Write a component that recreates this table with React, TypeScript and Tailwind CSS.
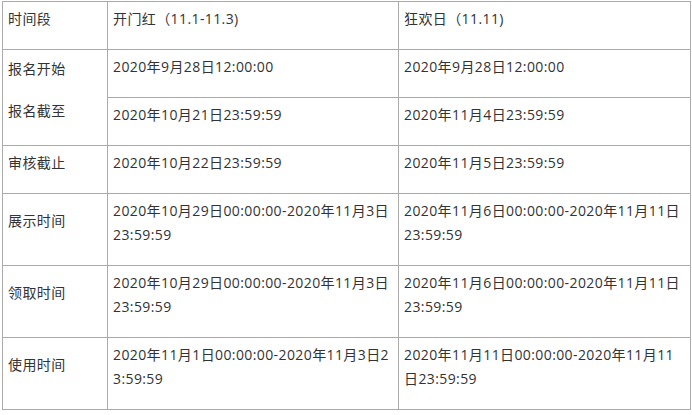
const rows: { label: string; a: string[]; b: string[] }[] = [
  { label: '审核截止', a: ['2020年10月22日23:59:59'], b: ['2020年11月5日23:59:59'] },
  {
    label: '展示时间',
    a: ['2020年10月29日00:00:00-2020年11月3日', '23:59:59'],
    b: ['2020年11月6日00:00:00-2020年11月11日', '23:59:59'],
  },
  {
    label: '领取时间',
    a: ['2020年10月29日00:00:00-2020年11月3日', '23:59:59'],
    b: ['2020年11月6日00:00:00-2020年11月11日', '23:59:59'],
  },
  {
    label: '使用时间',
    a: ['2020年11月1日00:00:00-2020年11月3日2', '3:59:59'],
    b: ['2020年11月11日00:00:00-2020年11月11', '日23:59:59'],
  },
];

const cell = 'border border-[#ababab] align-top pl-[5px] pr-[4px] pt-[5px] pb-[18px] whitespace-nowrap';
const labelCell = 'border border-[#ababab] align-middle pl-[5px] pr-[4px] pt-[5px] pb-[22px] whitespace-nowrap';

const App = () => {
  return (
    <div
      className="w-[692px] h-[415px] bg-white pl-[2px] pt-[1px] text-[14px] leading-[24px] tracking-[0.4px] text-[#333333] tabular-nums"
      style={{ fontFamily: '"Open Sans", "Noto Sans CJK SC", sans-serif' }}
    >
      <table className="border-collapse table-fixed w-[688px]">
        <colgroup>
          <col className="w-[105px]" />
          <col className="w-[291px]" />
          <col className="w-[292px]" />
        </colgroup>
        <tbody>
          <tr>
            <td className={cell}>时间段</td>
            <td className={cell}>开门红（11.1-11.3)</td>
            <td className={cell}>狂欢日（11.11)</td>
          </tr>
          <tr>
            <td rowSpan={2} className="border border-[#ababab] align-top pl-[5px] pt-[7px]">
              <p className="mb-[18px]">报名开始</p>
              <p>报名截至</p>
            </td>
            <td className={cell}>2020年9月28日12:00:00</td>
            <td className={cell}>2020年9月28日12:00:00</td>
          </tr>
          <tr>
            <td className={cell}>2020年10月21日23:59:59</td>
            <td className={cell}>2020年11月4日23:59:59</td>
          </tr>
          {rows.map((row) => (
            <tr key={row.label}>
              <td className={row.a.length > 1 ? labelCell : cell}>{row.label}</td>
              <td className={cell}>
                {row.a.map((line) => (
                  <div key={line}>{line}</div>
                ))}
              </td>
              <td className={cell}>
                {row.b.map((line) => (
                  <div key={line}>{line}</div>
                ))}
              </td>
            </tr>
          ))}
        </tbody>
      </table>
    </div>
  );
};

export default App;
